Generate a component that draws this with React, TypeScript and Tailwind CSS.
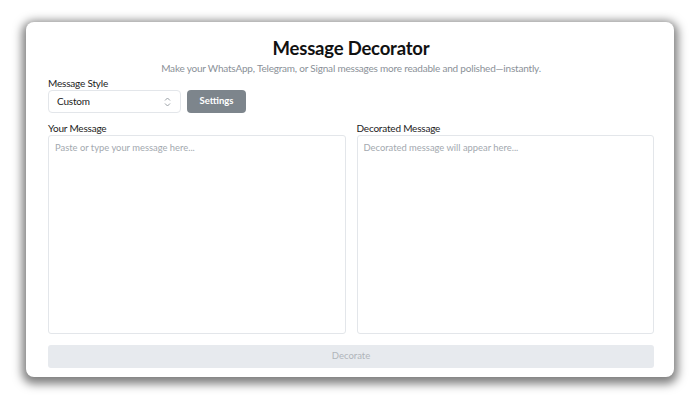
import React from "react";

export default function App() {
  return (
    <div className="w-[700px] h-[400px] bg-white pt-[22px] pl-[26px]" style={{ fontFamily: 'Lato, "Open Sans", sans-serif' }}>
      <div className="w-[648px] h-[355px] bg-white rounded-[8px] shadow-[0_3px_10px_4px_rgba(0,0,0,0.5)] pt-[14px] pl-[22px] pr-[20px] flex flex-col">
        <h1 className="text-center text-[18.5px] leading-[25px] font-bold text-[#111] tracking-[-0.2px]">Message Decorator</h1>
        <p className="text-center text-[10px] leading-[14px] text-[#8b9198] tracking-[-0.2px]">
          Make your WhatsApp, Telegram, or Signal messages more readable and polished—instantly.
        </p>
        <div className="mt-[1px] text-[10px] leading-[14px] text-[#222] tracking-[-0.2px]">Message Style</div>
        <div className="flex gap-[6px]">
          <div className="w-[133px] h-[23px] border border-[#e3e6ea] rounded-[4px] flex items-center justify-between pl-[8px] pr-[9px] text-[10px] text-[#222] tracking-[-0.2px]">
            <span>Custom</span>
            <svg width="7" height="10" viewBox="0 0 7 10" fill="none" stroke="#9aa0a6" strokeWidth="1">
              <path d="M1 3.5 L3.5 1 L6 3.5" />
              <path d="M1 6.5 L3.5 9 L6 6.5" />
            </svg>
          </div>
          <button className="w-[59px] h-[23px] rounded-[4px] bg-[#7d858c] text-white text-[9.5px] font-bold">Settings</button>
        </div>
        <div className="flex gap-[11px] mt-[8px]">
          <div className="flex-1 flex flex-col">
            <div className="text-[10px] leading-[14px] text-[#222] tracking-[-0.2px]">Your Message</div>
            <div className="h-[199px] border border-[#e3e6ea] rounded-[3px] px-[6px] pt-[5px] text-[9.4px] text-[#a3a9af]">
              Paste or type your message here...
            </div>
          </div>
          <div className="flex-1 flex flex-col">
            <div className="text-[10px] leading-[14px] text-[#222] tracking-[-0.2px]">Decorated Message</div>
            <div className="h-[199px] border border-[#e3e6ea] rounded-[3px] px-[6px] pt-[5px] text-[9.4px] text-[#a3a9af]">
              Decorated message will appear here...
            </div>
          </div>
        </div>
        <button className="mt-[11px] h-[23px] w-full rounded-[3px] bg-[#e7eaee] text-[9.5px] text-[#b0b5ba]">Decorate</button>
      </div>
    </div>
  );
}
